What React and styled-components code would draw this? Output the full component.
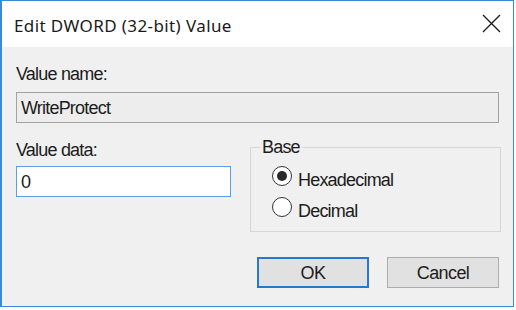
import React from "react";
import styled, { createGlobalStyle } from "styled-components";

const Global = createGlobalStyle`
  html, body { margin: 0; padding: 0; background: #ffffff; }
  * { box-sizing: border-box; }
`;

const Window = styled.div`
  width: 514px;
  height: 307px;
  border: 1px solid #3a8ad6;
  border-left-width: 2px;
  background: #f0f0f0;
  display: flex;
  flex-direction: column;
  font-family: "Liberation Sans", Arial, sans-serif;
  color: #1c1c1c;
`;

const TitleBar = styled.div`
  height: 46px;
  background: #ffffff;
  display: flex;
  align-items: flex-start;
  justify-content: space-between;
  padding: 12px 12px 0 12px;
  flex-shrink: 0;
`;

const Title = styled.div`
  font-family: "Noto Sans", "Open Sans", sans-serif;
  font-size: 17px;
  letter-spacing: 0.4px;
  line-height: 22px;
  margin-top: 2px;
  color: #1a1a1a;
`;

const CloseButton = styled.div`
  width: 19px;
  height: 19px;
  margin-top: 1px;
  display: flex;
`;

const Body = styled.div`
  flex: 1;
  display: flex;
  flex-direction: column;
  padding: 0 14px 0 14px;
`;

const Label = styled.div`
  font-size: 18px;
  letter-spacing: -0.8px;
  line-height: 20px;
  margin-top: ${(p) => p.$mt || 0}px;
`;

const TextField = styled.div`
  height: 31px;
  margin-top: ${(p) => p.$mt || 0}px;
  width: ${(p) => p.$w || "100%"};
  border: 1px solid ${(p) => (p.$readOnly ? "#a2a2a2" : "#5c9ee0")};
  background: ${(p) => (p.$readOnly ? "#ededed" : "#ffffff")};
  display: flex;
  align-items: center;
  padding-left: 4px;
  font-size: 18px;
  letter-spacing: -0.8px;
  line-height: 20px;
`;

const Row = styled.div`
  display: grid;
  grid-template-columns: 215px 251px;
  column-gap: 19px;
  align-items: start;
`;

const Column = styled.div`
  display: flex;
  flex-direction: column;
`;

const GroupBox = styled.div`
  position: relative;
  margin-top: 24px;
  height: 85px;
  border: 1px solid #d6d6d6;
  padding: 18px 0 0 21px;
  display: flex;
  flex-direction: column;
`;

const Legend = styled.span`
  position: absolute;
  top: -11px;
  left: 9px;
  padding: 0 2px;
  background: #f0f0f0;
  font-size: 18px;
  letter-spacing: -0.8px;
  line-height: 20px;
`;

const RadioRow = styled.label`
  height: 31px;
  display: flex;
  align-items: flex-start;
  gap: 6px;
`;

const RadioCircle = styled.span`
  width: 20px;
  height: 20px;
  margin-top: 0px;
  border-radius: 50%;
  border: 1.5px solid #333333;
  background: #ffffff;
  display: flex;
  align-items: center;
  justify-content: center;
  flex-shrink: 0;
  &::after {
    content: "";
    width: 10px;
    height: 10px;
    border-radius: 50%;
    background: #2a2a2a;
    display: ${(p) => (p.$checked ? "block" : "none")};
  }
`;

const RadioText = styled.span`
  margin-top: 4px;
  font-size: 18px;
  letter-spacing: -0.8px;
  line-height: 20px;
`;

const Buttons = styled.div`
  margin-top: 25px;
  display: flex;
  justify-content: flex-end;
  gap: 18px;
`;

const Button = styled.div`
  width: 112px;
  height: 31px;
  background: #e1e1e1;
  border: ${(p) => (p.$default ? "2px solid #2a78c8" : "1px solid #adadad")};
  display: flex;
  align-items: center;
  justify-content: center;
  font-size: 18px;
  letter-spacing: -0.6px;
  line-height: 20px;
`;

export default function App() {
  return (
    <>
      <Global />
      <Window>
        <TitleBar>
          <Title>Edit DWORD (32-bit) Value</Title>
          <CloseButton>
            <svg width="19" height="19" viewBox="0 0 19 19">
              <path d="M1 1 L18 18 M18 1 L1 18" stroke="#1a1a1a" strokeWidth="1.3" fill="none" />
            </svg>
          </CloseButton>
        </TitleBar>
        <Body>
          <Label $mt={17}>Value name:</Label>
          <TextField $mt={8} $readOnly>WriteProtect</TextField>
          <Row>
            <Column>
              <Label $mt={17}>Value data:</Label>
              <TextField $mt={6}>0</TextField>
            </Column>
            <GroupBox>
              <Legend>Base</Legend>
              <RadioRow>
                <RadioCircle $checked />
                <RadioText>Hexadecimal</RadioText>
              </RadioRow>
              <RadioRow>
                <RadioCircle />
                <RadioText>Decimal</RadioText>
              </RadioRow>
            </GroupBox>
          </Row>
          <Buttons>
            <Button $default>OK</Button>
            <Button>Cancel</Button>
          </Buttons>
        </Body>
      </Window>
    </>
  );
}
